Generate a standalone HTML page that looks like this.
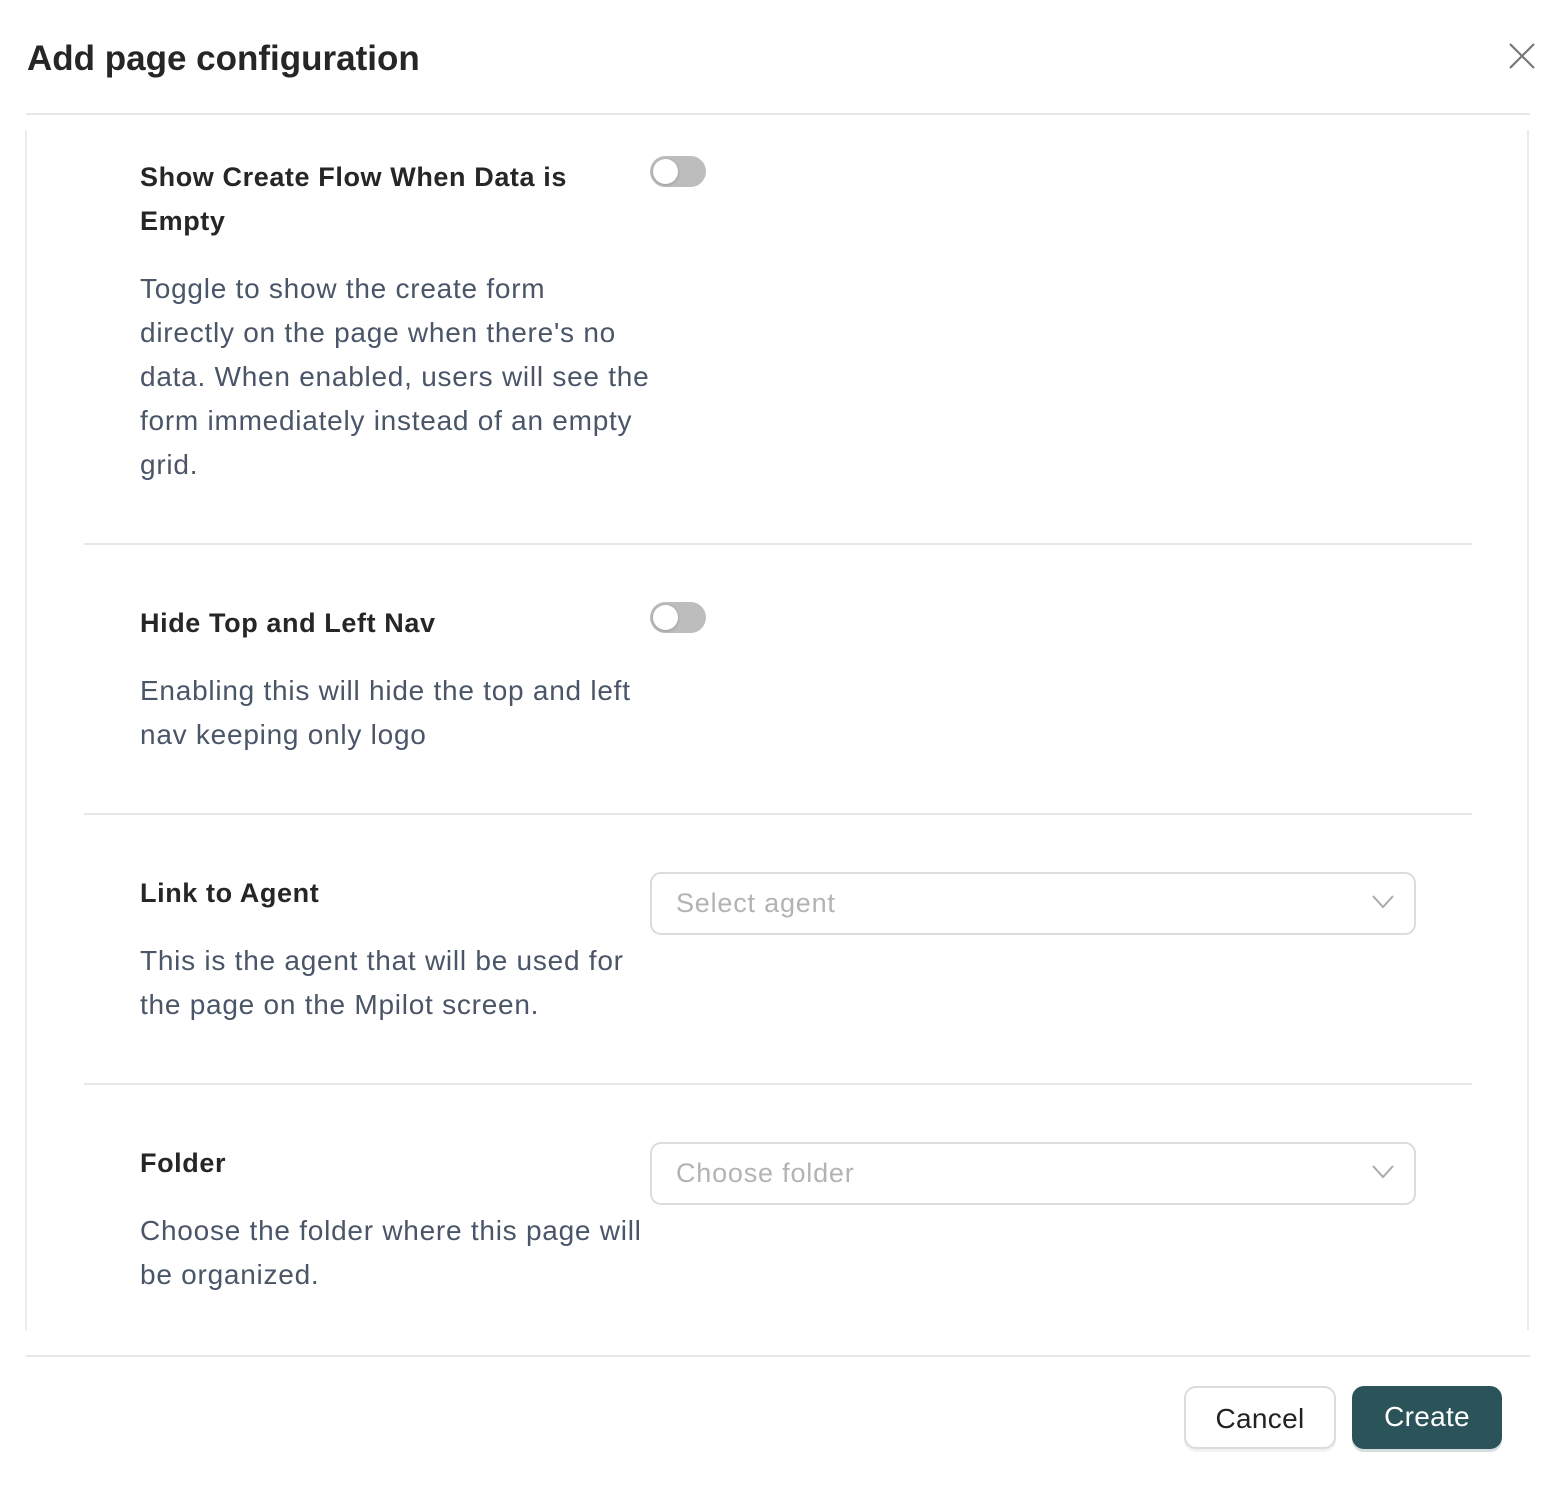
<!DOCTYPE html>
<html><head><meta charset="utf-8"><style>
*{margin:0;padding:0;box-sizing:border-box}
body{width:1568px;height:1508px;background:#fff;font-family:"Liberation Sans",Arial,sans-serif;position:relative;overflow:hidden}
.abs{position:absolute}
h1{position:absolute;left:27px;top:39px;font-size:35px;font-weight:700;color:#262626;letter-spacing:0px}
.close{left:1508px;top:42px}
.hline{height:2px;background:#e8e8e8}
.vline{width:2px;background:#ececec}
.label{position:absolute;left:140px;font-size:27px;font-weight:700;color:#262626;line-height:44px;white-space:nowrap;letter-spacing:0.6px}
.desc{position:absolute;left:140px;font-size:28px;color:#4a5568;line-height:44px;white-space:nowrap;letter-spacing:0.75px}
.toggle{position:absolute;left:650px;width:56px;height:31px;border-radius:16px;background:#bdbdbd}
.toggle::after{content:"";position:absolute;left:3px;top:3px;width:25px;height:25px;border-radius:50%;background:#fff;box-shadow:0 1px 3px rgba(0,0,0,.2)}
.sel{position:absolute;left:650px;width:766px;height:63px;border:2px solid #dcdcdc;border-radius:11px;font-size:27px;color:#b3b3b3;padding-left:24px;line-height:59px;letter-spacing:0.8px}
.sel svg{position:absolute;right:20px;top:21px}
.btn{position:absolute;top:1386px;height:63px;border-radius:12px;font-size:28px;text-align:center;line-height:61px;letter-spacing:0.3px}
</style></head><body>
<h1>Add page configuration</h1>
<svg class="abs close" width="28" height="28" viewBox="0 0 28 28"><path d="M2 2L26 26M26 2L2 26" stroke="#777" stroke-width="2.2"/></svg>
<div class="abs hline" style="left:26px;top:113px;width:1504px"></div>
<div class="abs vline" style="left:25px;top:130px;height:1200px"></div>
<div class="abs vline" style="left:1527px;top:130px;height:1200px"></div>

<div class="label" style="top:155px">Show Create Flow When Data is<br>Empty</div>
<div class="toggle" style="top:156px"></div>
<div class="desc" style="top:267px">Toggle to show the create form<br>directly on the page when there's no<br>data. When enabled, users will see the<br>form immediately instead of an empty<br>grid.</div>
<div class="abs hline" style="left:84px;top:543px;width:1388px"></div>

<div class="label" style="top:601px">Hide Top and Left Nav</div>
<div class="toggle" style="top:602px"></div>
<div class="desc" style="top:669px">Enabling this will hide the top and left<br>nav keeping only logo</div>
<div class="abs hline" style="left:84px;top:813px;width:1388px"></div>

<div class="label" style="top:871px">Link to Agent</div>
<div class="sel" style="top:872px">Select agent<svg width="22" height="14" viewBox="0 0 22 14"><path d="M1 1L11 12L21 1" fill="none" stroke="#aaa" stroke-width="2"/></svg></div>
<div class="desc" style="top:939px">This is the agent that will be used for<br>the page on the Mpilot screen.</div>
<div class="abs hline" style="left:84px;top:1083px;width:1388px"></div>

<div class="label" style="top:1141px">Folder</div>
<div class="sel" style="top:1142px">Choose folder<svg width="22" height="14" viewBox="0 0 22 14"><path d="M1 1L11 12L21 1" fill="none" stroke="#aaa" stroke-width="2"/></svg></div>
<div class="desc" style="top:1209px">Choose the folder where this page will<br>be organized.</div>

<div class="abs hline" style="left:26px;top:1355px;width:1504px"></div>
<div class="btn" style="left:1184px;width:152px;border:2px solid #dcdcdc;color:#222;box-shadow:0 3px 0 #f2f2f2">Cancel</div>
<div class="btn" style="left:1352px;width:150px;background:#2b535a;color:#fff;box-shadow:0 3px 0 #d5dfe0">Create</div>
</body></html>
